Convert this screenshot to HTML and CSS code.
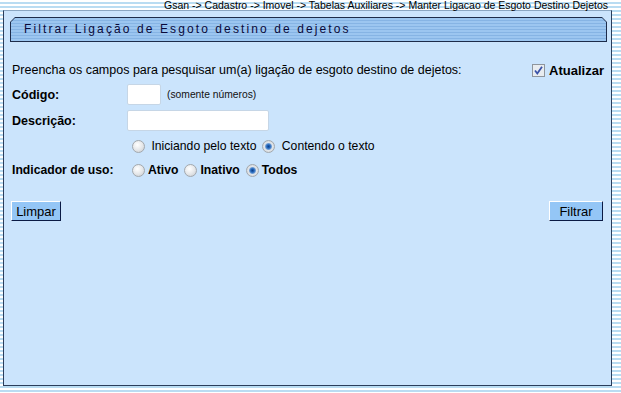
FILE: index.html
```html
<!DOCTYPE html>
<html lang="pt-BR">
<head>
    <meta charset="UTF-8">
    <title>Filtrar Ligação de Esgoto destino de dejetos</title>
    <link rel="stylesheet" href="styles.css">
</head>
<body>

<div class="crumbs">Gsan -&gt; Cadastro -&gt; Imovel -&gt; Tabelas Auxiliares -&gt; Manter Ligacao de Esgoto Destino Dejetos</div>

<div class="panel">
    <!-- barra de titulo -->
    <div class="title-bar">
        <div class="title-inner">Filtrar Ligação de Esgoto destino de dejetos</div>
    </div>

    <div class="intro">
        <span>Preencha os campos para pesquisar um(a) ligação de esgoto destino de dejetos:</span>
        <label class="update">
            <svg class="check" width="13" height="13" viewBox="0 0 13 13">
                <rect x="0.5" y="0.5" width="12" height="12" fill="#e8ecf0" stroke="#8f959c"/>
                <path d="M3 6.5 L5.3 9.5 L10 2.8" fill="none" stroke="#3a52a8" stroke-width="1.8"/>
            </svg>
            Atualizar
        </label>
    </div>

    <div class="row">
        <label class="field">Código:</label>
        <input type="text" class="txt code">
        <span class="hint">(somente números)</span>
    </div>

    <div class="row">
        <label class="field">Descrição:</label>
        <input type="text" class="txt desc">
    </div>

    <div class="row radios">
        <span class="field"></span>
        <input type="radio" name="tipo" class="rd">
        <span class="opt">&nbsp;Iniciando pelo texto</span>
        <input type="radio" name="tipo" class="rd" checked>
        <span class="opt">&nbsp;Contendo o texto</span>
    </div>

    <div class="row radios">
        <label class="field">Indicador de uso:</label>
        <input type="radio" name="uso" class="rd">
        <span class="opt bold">Ativo</span>
        <input type="radio" name="uso" class="rd">
        <span class="opt bold">Inativo</span>
        <input type="radio" name="uso" class="rd" checked>
        <span class="opt bold">Todos</span>
    </div>

    <div class="buttons">
        <button class="btn limpar">Limpar</button>
        <button class="btn filtrar">Filtrar</button>
    </div>
</div>

</body>
</html>
```

FILE: styles.css
```css
body {
    margin: 0;
    height: 393px;
    overflow: hidden;
    font-family: "Liberation Sans", Arial, sans-serif;
    color: #000;
    background: repeating-linear-gradient(to bottom, #ffffff 0, #ffffff 2px, #b9dcf2 2px, #b9dcf2 4px);
}
.crumbs {
    height: 10px;
    line-height: 10px;
    font-size: 10.5px;
    text-align: right;
    padding-right: 13px;
    white-space: nowrap;
}
.panel {
    margin: 0 9px 0 3px;
    height: 368px;
    background: #cbe4fc;
    border: 1px solid #2b3d5a;
    border-top-color: #8aa6c2;
    padding: 6px 4px 0 6px;
}
.title-bar {
    height: 25px;
    padding: 1px;
    box-sizing: border-box;
    background: #1d2c4a;
    clip-path: polygon(5px 0, calc(100% - 5px) 0, 100% 5px, 100% 100%, 0 100%, 0 5px);
}
.title-inner {
    height: 23px;
    line-height: 23px;
    padding-left: 13px;
    font-size: 12px;
    letter-spacing: 2.1px;
    color: #0a0a3a;
    background: repeating-linear-gradient(to bottom, #9cc6f0 0, #9cc6f0 2px, #86b4e4 2px, #86b4e4 3px);
    clip-path: polygon(4px 0, calc(100% - 4px) 0, 100% 4px, 100% 100%, 0 100%, 0 4px);
    white-space: nowrap;
}
.intro {
    margin-top: 19px;
    height: 18px;
    display: flex;
    align-items: center;
    justify-content: space-between;
    font-size: 12.5px;
    padding: 0 3px 0 2px;
}
.update {
    display: flex;
    align-items: center;
    gap: 4px;
    font-weight: bold;
    font-size: 13px;
}
.row {
    display: flex;
    align-items: center;
    height: 21px;
    margin-top: 5px;
    padding-left: 2px;
    font-size: 12.5px;
}
.field {
    width: 115px;
    flex: none;
    font-weight: bold;
}
.txt {
    height: 21px;
    box-sizing: border-box;
    background: #fff;
    border: 1px solid #c6d6e6;
    border-radius: 2px;
    padding: 0 3px;
    margin: 0;
}
.code {
    width: 34px;
}
.desc {
    width: 142px;
}
.hint {
    font-size: 10.3px;
    margin-left: 6px;
    color: #111;
}
.radios {
    height: 18px;
    margin-top: 6px;
    font-size: 12.2px;
}
.rd {
    appearance: none;
    width: 13px;
    height: 13px;
    margin: 0 3px 0 5px;
    border: 1px solid #a3a8ad;
    border-radius: 50%;
    background: radial-gradient(circle at 40% 35%, #ffffff 0, #e4e6e8 55%, #c3c7cc 100%);
    box-sizing: border-box;
    flex: none;
}
.rd:checked {
    background: radial-gradient(circle at 50% 50%, #0f3f88 0, #2266bb 22%, #6b9ad4 38%, #e2e6ea 50%, #c9cdd2 100%);
}
.opt {
    margin-right: 1px;
}
.bold {
    font-weight: bold;
}
.buttons {
    display: flex;
    justify-content: space-between;
    margin-top: 22px;
    padding-left: 1px;
    padding-right: 4px;
}
.btn {
    height: 20px;
    padding: 0;
    font-family: "Liberation Sans", Arial, sans-serif;
    font-size: 13px;
    color: #000;
    background: #94c6f6;
    border: 1px solid;
    border-color: #ffffff #0a1a44 #0a1a44 #ffffff;
    border-radius: 0;
}
.limpar {
    width: 50px;
}
.filtrar {
    width: 54px;
}
```
